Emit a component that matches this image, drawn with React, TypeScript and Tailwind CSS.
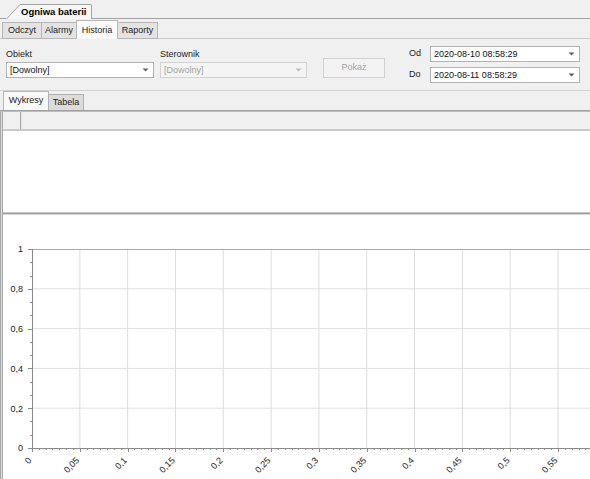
import React from 'react';

const FONT = 'Liberation Sans, Arial, sans-serif';

function Arrow({ disabled }: { disabled?: boolean }) {
  return (
    <svg width="7" height="4" viewBox="0 0 7 4" className="shrink-0">
      <path d="M0.5 0.5h6L3.5 3.5z" fill={disabled ? '#bcbcbc' : '#606060'} />
    </svg>
  );
}

function Combo({ value, disabled, width }: { value: string; disabled?: boolean; width: string }) {
  return (
    <div
      className={`flex h-[16px] items-center justify-between border pl-[3px] pr-[4px] ${width} ${
        disabled ? 'border-[#d3d3d3] bg-[#f4f4f4] text-[#a3a3a3]' : 'border-[#b3b3b3] bg-white text-[#111]'
      }`}
    >
      <span className="leading-none">{value}</span>
      <Arrow disabled={disabled} />
    </div>
  );
}

function Tab({ label, active, width }: { label: string; active?: boolean; width: string }) {
  if (active) {
    return (
      <div className={`-ml-px flex h-[19px] items-center justify-center border border-b-0 border-[#b6b6b6] bg-[#fbfbfb] pt-[1px] ${width}`}>
        {label}
      </div>
    );
  }
  return (
    <div className={`-ml-px flex h-[17px] items-center justify-center border border-[#b6b6b6] bg-[#e3e3e3] ${width}`}>
      {label}
    </div>
  );
}

function Chart() {
  const ox = 3;
  const oy = 215;
  const left = 32;
  const top = 249;
  const bottom = 448;
  const stepX = 47.82;
  const stepY = (bottom - top) / 5;
  const xs = Array.from({ length: 13 }, (_, i) => i);
  const ys = Array.from({ length: 6 }, (_, i) => i);

  const xLabel = (i: number) => {
    const v = i * 5;
    if (v === 0) return '0';
    if (v % 10 === 0) return '0,' + v / 10;
    return '0,' + String(v).padStart(2, '0');
  };
  const yLabel = ['0', '0,2', '0,4', '0,6', '0,8', '1'];

  return (
    <svg width="587" height="264" className="block" fontFamily={FONT} fontSize="9">
      <g transform={`translate(${-ox} ${-oy})`}>
        {/* grid */}
        {xs.slice(1).map((i) => (
          <line key={'gx' + i} x1={left + i * stepX} x2={left + i * stepX} y1={top} y2={bottom} stroke="#dcdcdc" />
        ))}
        {ys.slice(1, 5).map((i) => (
          <line key={'gy' + i} x1={left} x2={600} y1={bottom - i * stepY} y2={bottom - i * stepY} stroke="#e0e0e0" />
        ))}
        <line x1={28} x2={600} y1={top + 0.5} y2={top + 0.5} stroke="#a9a9a9" />

        {/* y axis */}
        <line x1={left + 0.5} x2={left + 0.5} y1={top} y2={bottom + 4} stroke="#8a8a8a" />
        {ys.map((i) => {
          const y = Math.round(bottom - i * stepY) + 0.5;
          return <line key={'ty' + i} x1={28} x2={left} y1={y} y2={y} stroke="#8a8a8a" />;
        })}
        {ys.slice(0, 5).flatMap((i) =>
          [1, 2].map((j) => {
            const y = Math.round(bottom - i * stepY - (j * stepY) / 3) + 0.5;
            return <line key={`my${i}-${j}`} x1={30} x2={left} y1={y} y2={y} stroke="#8a8a8a" />;
          })
        )}
        {ys.map((i) => (
          <text key={'ly' + i} x={23} y={bottom - i * stepY + 3.3} textAnchor="end" fill="#222">
            {yLabel[i]}
          </text>
        ))}

        {/* x axis */}
        <line x1={28} x2={600} y1={bottom + 0.5} y2={bottom + 0.5} stroke="#8a8a8a" />
        {xs.map((i) => {
          const x = Math.round(left + i * stepX) + 0.5;
          return <line key={'tx' + i} x1={x} x2={x} y1={bottom} y2={bottom + 4} stroke="#8a8a8a" />;
        })}
        {xs.slice(0, 12).flatMap((i) =>
          [1, 2, 3, 4, 5, 6].map((j) => {
            const x = Math.round(left + i * stepX + (j * stepX) / 7) + 0.5;
            return <line key={`mx${i}-${j}`} x1={x} x2={x} y1={bottom} y2={bottom + 2} stroke="#8a8a8a" />;
          })
        )}
        {xs.slice(0, 12).map((i) => {
          const x = left + i * stepX;
          return (
            <text key={'lx' + i} x={x} y={461} textAnchor="end" fill="#222" transform={`rotate(-45 ${x} 461)`}>
              {xLabel(i)}
            </text>
          );
        })}
      </g>
    </svg>
  );
}

export default function App() {
  return (
    <div className="flex h-screen w-full flex-col overflow-hidden bg-[#f0f0f0] font-[Liberation_Sans,Arial,sans-serif] text-[9px] text-[#1c1c1c]">
      {/* document tab */}
      <div className="flex h-[19px] shrink-0 items-end">
        <div className="h-px w-[6px] bg-[#a2a2a2]" />
        <svg width="15" height="15" viewBox="0 0 15 15" className="block shrink-0">
          <path d="M0.5 15L14 0.5H15" fill="none" stroke="#a2a2a2" />
          <path d="M1.5 15L14.3 1.2H15V15z" fill="#f7f7f7" />
        </svg>
        <div className="flex h-[15px] items-center rounded-tr-[2px] border-t border-r border-[#a2a2a2] bg-[#f7f7f7] pr-[5px] text-[9.5px] font-bold text-black">
          Ogniwa baterii
        </div>
        <div className="h-px flex-1 bg-[#a2a2a2]" />
      </div>

      {/* view tabs */}
      <div className="flex h-[20px] shrink-0 items-end">
        <div className="h-px w-[3px] bg-[#c9c9c9]" />
        <Tab label="Odczyt" width="w-[40px]" />
        <Tab label="Alarmy" width="w-[36px]" />
        <Tab label="Historia" active width="w-[42px]" />
        <Tab label="Raporty" width="w-[41px]" />
        <div className="h-px flex-1 bg-[#c9c9c9]" />
      </div>

      {/* filters */}
      <div className="flex h-[52px] shrink-0 border-b border-[#d2d2d2] pl-[6px]">
        <div className="flex flex-col pt-[9px]">
          <span className="h-[12px] leading-[12px]">Obiekt</span>
          <div className="mt-[2px]">
            <Combo value="[Dowolny]" width="w-[148px]" />
          </div>
        </div>
        <div className="ml-[6px] flex flex-col pt-[9px]">
          <span className="h-[12px] leading-[12px]">Sterownik</span>
          <div className="mt-[2px]">
            <Combo value="[Dowolny]" disabled width="w-[147px]" />
          </div>
        </div>
        <div className="ml-[16px] pt-[19px]">
          <div className="flex h-[20px] w-[62px] items-center justify-center border border-[#d0d0d0] bg-[#f3f3f3] text-[#a3a3a3]">
            Pokaż
          </div>
        </div>
        <div className="ml-[24px] flex flex-col gap-[5px] pt-[7px]">
          <div className="flex items-center">
            <span className="w-[21px]">Od</span>
            <Combo value="2020-08-10 08:58:29" width="w-[150px]" />
          </div>
          <div className="flex items-center">
            <span className="w-[21px]">Do</span>
            <Combo value="2020-08-11 08:58:29" width="w-[150px]" />
          </div>
        </div>
      </div>

      {/* chart / table tabs */}
      <div className="flex h-[19px] shrink-0 items-end pl-[4px]">
        <div className="-ml-px flex h-[19px] w-[46px] items-center justify-center border border-b-0 border-[#b6b6b6] bg-[#f9f9f9]">
          Wykresy
        </div>
        <div className="-ml-px flex h-[16px] w-[36px] items-center justify-center border border-b-0 border-[#b0b0b0] bg-[#dcdcdc]">
          Tabela
        </div>
      </div>
      <div className="h-px shrink-0 bg-[#a0a0a0]" />
      <div className="h-px shrink-0 bg-[#bdbdbd]" />

      <div className="flex min-h-0 flex-1">
        <div className="w-[3px] shrink-0 border-x border-[#a6a6a6] bg-[#dedede]" />
        <div className="flex min-w-0 flex-1 flex-col">
          {/* grid header */}
          <div className="flex h-[17px] shrink-0 bg-[#f0f0f0]">
            <div className="w-[18px] border-r border-[#a8a8a8]" />
            <div className="w-px bg-[#e4e4e4]" />
          </div>
          <div className="h-[2px] shrink-0 bg-[#c9c9c9]" />
          <div className="h-[81px] shrink-0 bg-white" />
          {/* splitter */}
          <div className="h-px shrink-0 bg-[#c8c8c8]" />
          <div className="h-px shrink-0 bg-[#a0a0a0]" />
          <div className="h-px shrink-0 bg-[#d8d8d8]" />
          <div className="min-h-0 flex-1 overflow-hidden bg-white">
            <Chart />
          </div>
        </div>
      </div>
    </div>
  );
}
